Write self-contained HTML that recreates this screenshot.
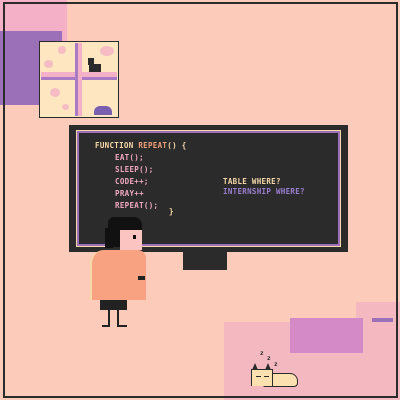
<!DOCTYPE html>
<html><head><style>
*{margin:0;padding:0;box-sizing:border-box}
body{width:400px;height:400px;background:#fdcbb9;position:relative;overflow:hidden;font-family:"DejaVu Sans Mono","Liberation Mono",monospace}
div{position:absolute}
.t{font-size:7.5px;font-weight:bold;line-height:8px;letter-spacing:0.3px;white-space:pre}
</style></head><body>
<div style="left:0;top:0;width:67px;height:105px;background:#f3b0c6"></div>
<div style="left:0;top:31px;width:62px;height:74px;background:#9b70b8"></div>
<div style="left:224px;top:322px;width:176px;height:78px;background:#f4b8c0"></div>
<div style="left:356px;top:302px;width:44px;height:22px;background:#f4b8c0"></div>
<div style="left:290px;top:318px;width:73px;height:35px;background:#d48ac6"></div>
<div style="left:372px;top:318px;width:21px;height:4px;background:#9b70b8"></div>
<!-- frame -->
<div style="left:3px;top:2px;width:395px;height:396px;border:2px solid #2b2b2b"></div>
<!-- window -->
<div style="left:39px;top:41px;width:80px;height:77px;background:#fde6c0;border:1px solid #2b2b2b"></div>
<div style="left:41px;top:72px;width:76px;height:5px;background:#f3b0c6"></div>
<div style="left:41px;top:77px;width:76px;height:3px;background:#a97bc4"></div>
<div style="left:77px;top:43px;width:5px;height:73px;background:#f3b0c6"></div>
<div style="left:75px;top:43px;width:3px;height:73px;background:#a97bc4"></div>
<div style="left:89px;top:64px;width:12px;height:8px;background:#2b2b2b"></div>
<div style="left:88px;top:58px;width:6px;height:7px;background:#2b2b2b"></div>
<div style="left:94px;top:106px;width:18px;height:9px;background:#7a5fb0;border-radius:6px 6px 0 0"></div>
<div style="left:58px;top:46px;width:8px;height:8px;background:#f6bcc4;border-radius:50%"></div>
<div style="left:100px;top:46px;width:14px;height:10px;background:#f6bcc4;border-radius:50%"></div>
<div style="left:44px;top:60px;width:9px;height:8px;background:#f6bcc4;border-radius:50%"></div>
<div style="left:50px;top:88px;width:10px;height:9px;background:#f6bcc4;border-radius:50%"></div>
<div style="left:62px;top:104px;width:7px;height:6px;background:#f6bcc4;border-radius:50%"></div>
<!-- monitor -->
<div style="left:69px;top:125px;width:279px;height:127px;background:#2b2b2b"></div>
<div style="left:76px;top:130px;width:265px;height:117px;border:1px solid #f7d9a8"></div>
<div style="left:77px;top:131px;width:263px;height:115px;border:2px solid #9b70b8"></div>
<div style="left:183px;top:251px;width:44px;height:19px;background:#2b2b2b"></div>
<div class="t" style="left:95px;top:142px;color:#f7d9a8">FUNCTION <span style="color:#f2a07a">REPEAT</span>() {</div>
<div class="t" style="left:115px;top:154px;color:#f0a8c0">EAT();</div>
<div class="t" style="left:115px;top:166px;color:#f0a8c0">SLEEP();</div>
<div class="t" style="left:115px;top:178px;color:#f0a8c0">CODE++;</div>
<div class="t" style="left:115px;top:190px;color:#f0a8c0">PRAY++</div>
<div class="t" style="left:115px;top:202px;color:#f0a8c0">REPEAT();</div>
<div class="t" style="left:169px;top:208px;color:#f7d9a8">}</div>
<div class="t" style="left:223px;top:178px;color:#f7d9a8">TABLE WHERE?</div>
<div class="t" style="left:223px;top:188px;color:#9b7fd0">INTERNSHIP WHERE?</div>
<!-- person -->
<div style="left:108px;top:217px;width:34px;height:30px;background:#111;border-radius:6px 8px 2px 2px"></div>
<div style="left:105px;top:228px;width:8px;height:20px;background:#111"></div>
<div style="left:120px;top:230px;width:22px;height:20px;background:#fcc4c0"></div>
<div style="left:133px;top:235px;width:3px;height:4px;background:#111"></div>
<div style="left:90px;top:250px;width:56px;height:50px;background:#f8a282;border-radius:14px 8px 0 0;border-left:2px solid #f7d9a8"></div>
<div style="left:138px;top:276px;width:7px;height:4px;background:#222"></div>
<div style="left:100px;top:300px;width:27px;height:10px;background:#222"></div>
<div style="left:108px;top:310px;width:2px;height:16px;background:#222"></div>
<div style="left:117px;top:310px;width:2px;height:16px;background:#222"></div>
<div style="left:102px;top:325px;width:8px;height:2px;background:#222"></div>
<div style="left:117px;top:325px;width:10px;height:2px;background:#222"></div>
<!-- cat -->
<div style="left:263px;top:373px;width:35px;height:14px;background:#fde0b0;border:1px solid #2b2b2b;border-radius:6px 8px 4px 2px"></div>
<div style="left:251px;top:369px;width:22px;height:17px;background:#fde0b0;border:1px solid #2b2b2b"></div>
<div style="left:252px;top:370px;width:20px;height:16px;background:#fde0b0"></div>
<div style="left:252px;top:363px;width:0;height:0;border-left:3px solid transparent;border-right:3px solid transparent;border-bottom:7px solid #2b2b2b"></div>
<div style="left:265px;top:363px;width:0;height:0;border-left:3px solid transparent;border-right:3px solid transparent;border-bottom:7px solid #2b2b2b"></div>
<div style="left:256px;top:376px;width:5px;height:1px;background:#2b2b2b"></div>
<div style="left:264px;top:376px;width:5px;height:1px;background:#2b2b2b"></div>
<div class="t" style="left:260px;top:350px;color:#2b2b2b;font-size:6px">z</div>
<div class="t" style="left:267px;top:355px;color:#2b2b2b;font-size:6px">z</div>
<div class="t" style="left:274px;top:361px;color:#2b2b2b;font-size:6px">z</div>
</body></html>
